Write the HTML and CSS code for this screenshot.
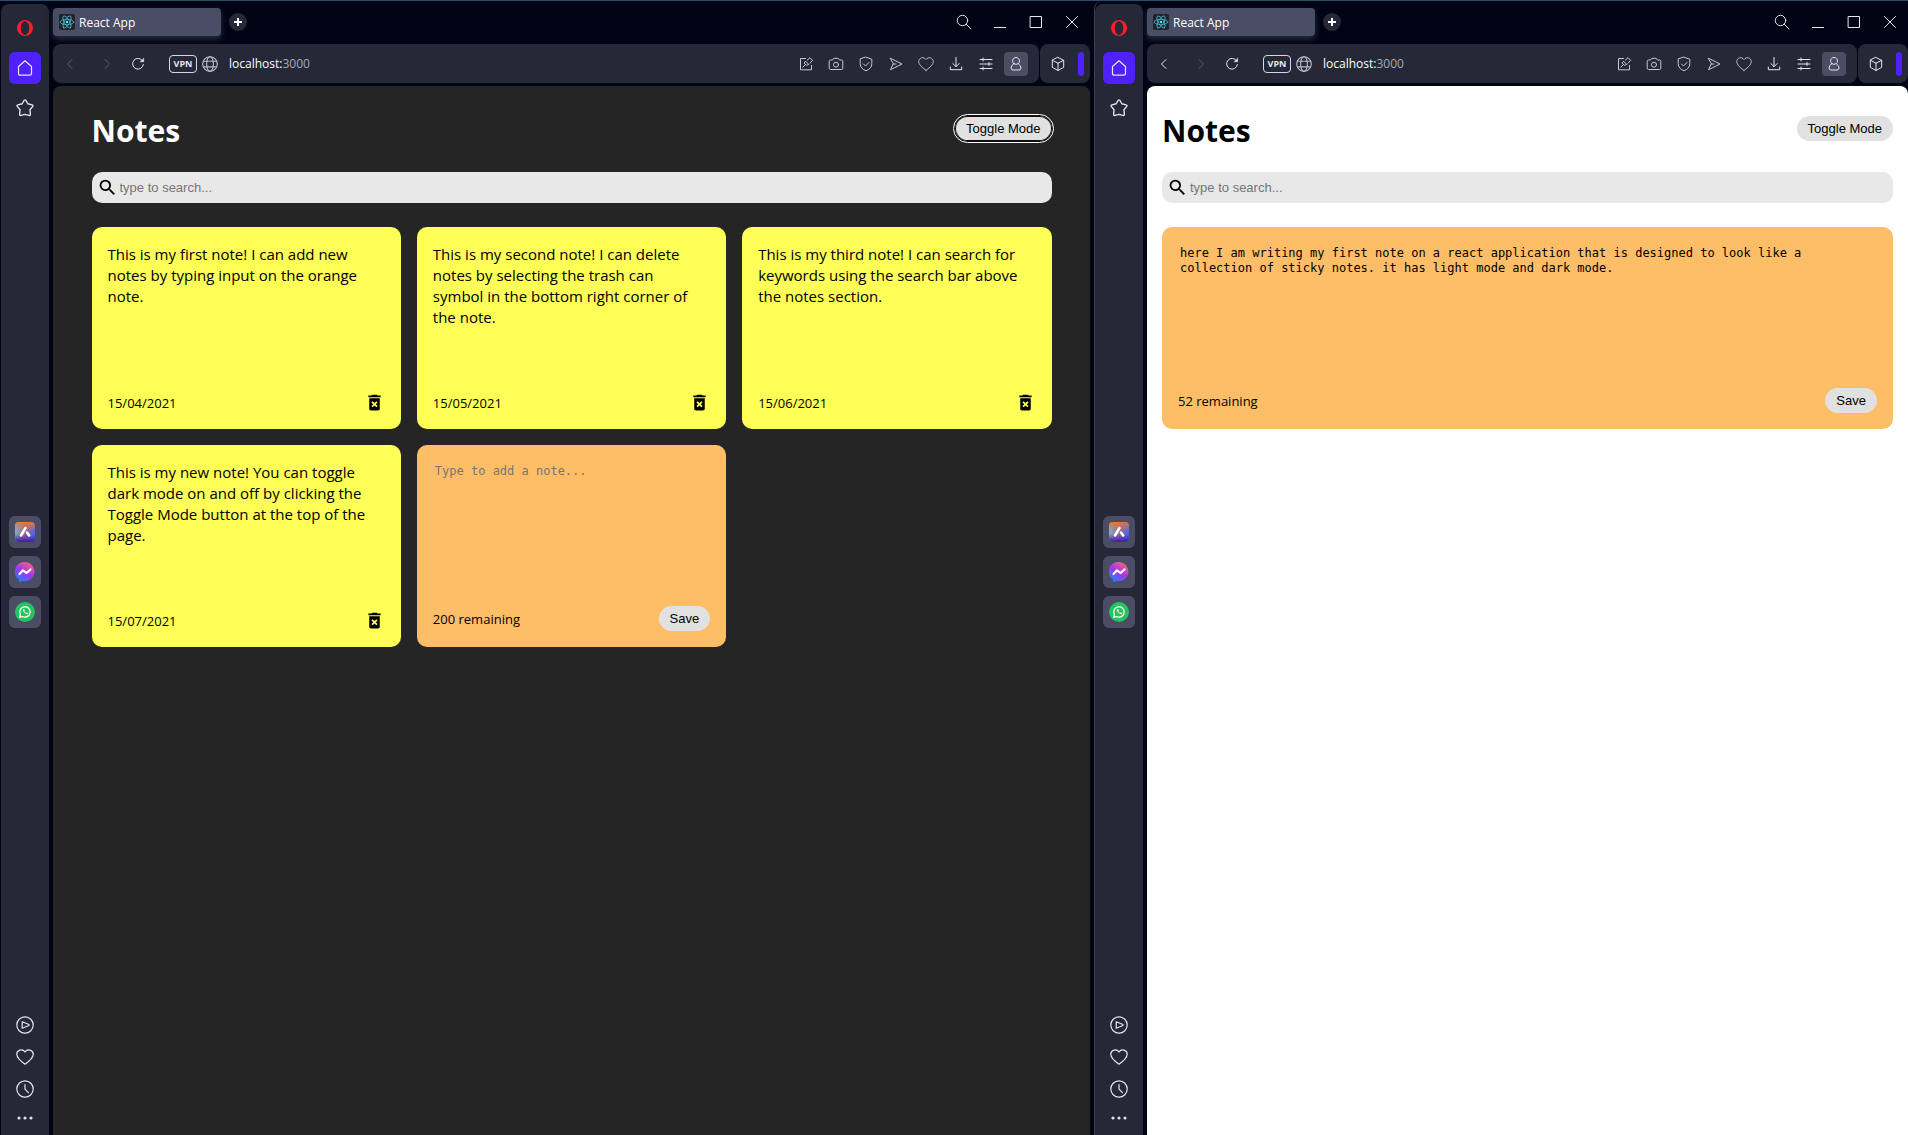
FILE: index.html
```html
<!DOCTYPE html>
<html lang="en">
<head>
<meta charset="utf-8">
<title>React App</title>
<link rel="stylesheet" href="styles.css">
</head>
<body>
<svg class="sprite" aria-hidden="true">
  <defs>
    <linearGradient id="g-messenger" x1="0.8" y1="0" x2="0.2" y2="1">
      <stop offset="0" stop-color="#ff6470"/><stop offset="0.5" stop-color="#a236f0"/><stop offset="1" stop-color="#0a8cff"/>
    </linearGradient>
    <linearGradient id="g-aria" x1="0" y1="0.4" x2="1" y2="0.6">
      <stop offset="0" stop-color="#6fb6d8"/><stop offset="0.45" stop-color="#a4688c"/><stop offset="1" stop-color="#4468f0"/>
    </linearGradient>
    <linearGradient id="g-aria-top" x1="0" y1="0" x2="0" y2="1">
      <stop offset="0" stop-color="#e07840"/><stop offset="0.5" stop-color="#e07840" stop-opacity="0"/><stop offset="0.6" stop-color="#3a1ca0" stop-opacity="0"/><stop offset="1" stop-color="#3a1ca0"/>
    </linearGradient>
  </defs>
  <symbol id="i-opera" viewBox="0 0 16 16"><path fill="#ff1b2d" fill-rule="evenodd" d="M8 0a8 8 0 1 0 0 16A8 8 0 0 0 8 0zm0 1.200c2.600 0 4.200 3.100 4.200 6.800S10.600 14.800 8 14.800 3.800 11.700 3.800 8 5.400 1.200 8 1.200z"/></symbol>
  <symbol id="i-home" viewBox="0 0 16 16"><path d="M1.500 6.500 8 .8l6.500 5.700v7q0 1.700-1.700 1.700H3.200q-1.700 0-1.700-1.700z"/></symbol>
  <symbol id="i-star" viewBox="0 0 16 16"><path d="M7.200 1.200q.8-.9 1.600 0l1.700 3 3.900 1q1.100.4.500 1.400l-2.500 2.900.4 4.200q-.1 1.200-1.300.9L8 13.600l-3.500 1q-1.200.3-1.300-.9l.4-4.200L1.100 6.600q-.6-1 .5-1.400l3.900-1z"/></symbol>
  <symbol id="i-aria" viewBox="0 0 20 20"><rect width="20" height="20" rx="4" fill="url(#g-aria)" stroke="none"/><rect width="20" height="20" rx="4" fill="url(#g-aria-top)" stroke="none"/><path d="M6 13.500 10.500 6M12 10.500l2.200 3" stroke="#fff" stroke-width="2.600"/></symbol>
  <symbol id="i-messenger" viewBox="0 0 20 20"><path fill="url(#g-messenger)" stroke="none" d="M10 0a10 9.600 0 1 1-2.500 19L4 20.400v-2.800A9.600 9.600 0 0 1 10 0z"/><path d="M4.500 12 8 8.300l3.500 2.700L15.500 7.500" stroke="#fff" stroke-width="2.200"/></symbol>
  <symbol id="i-whatsapp" viewBox="0 0 20 20"><circle cx="10" cy="10" r="10" fill="#25c55e" stroke="none"/><path d="M4.600 15.400l.8-2.900a5.200 5.200 0 1 1 2 2z" stroke="#fff" stroke-width="1.300"/><path d="M7.800 7.500q.3 3.700 4.500 4.800l1-1.100-1.600-.9-.8.600q-1.300-.6-1.600-1.700l.5-.7-.7-1.500z" fill="#fff" stroke="none"/></symbol>
  <symbol id="i-play" viewBox="0 0 18 18"><circle cx="9" cy="9" r="8.200"/><path d="M6.200 5.800v6.400L13 9.500V8.500z"/></symbol>
  <symbol id="i-heart" viewBox="0 0 18 16"><path d="M9 15.200Q.8 9.500.8 5.300C.8 1 6.500-.8 9 3c2.500-3.800 8.200-2 8.200 2.300Q17.200 9.500 9 15.200z"/></symbol>
  <symbol id="i-clock" viewBox="0 0 18 18"><circle cx="9" cy="9" r="8.200"/><path d="M9 4.500v4.700l3.400 3.500"/></symbol>
  <symbol id="i-dots" viewBox="0 0 16 4"><g fill="#e0e2ea" stroke="none"><circle cx="2" cy="2" r="1.600"/><circle cx="8" cy="2" r="1.600"/><circle cx="14" cy="2" r="1.600"/></g></symbol>
  <symbol id="i-react" viewBox="0 0 16 16"><rect width="16" height="16" rx="2" fill="#20232a" stroke="none"/><g stroke="#4fb6cf" stroke-width="0.800"><ellipse cx="8" cy="8" rx="6.800" ry="2.700"/><ellipse cx="8" cy="8" rx="6.800" ry="2.700" transform="rotate(60 8 8)"/><ellipse cx="8" cy="8" rx="6.800" ry="2.700" transform="rotate(120 8 8)"/></g><circle cx="8" cy="8" r="1.300" fill="#61dafb" stroke="none"/></symbol>
  <symbol id="i-plus" viewBox="0 0 10 10"><path d="M5 1v8M1 5h8" stroke="#fff" stroke-width="2" stroke-linecap="butt"/></symbol>
  <symbol id="i-find" viewBox="0 0 16 16"><circle cx="6.500" cy="6.500" r="5.200"/><path d="M10.300 10.300 15 15"/></symbol>
  <symbol id="i-min" viewBox="0 0 14 14"><path d="M1 12.500h12" stroke-linecap="butt"/></symbol>
  <symbol id="i-max" viewBox="0 0 14 14"><path d="M1.500 1.500h11v11h-11z" stroke-linejoin="miter"/></symbol>
  <symbol id="i-close" viewBox="0 0 14 14"><path d="M1.500 1.500l11 11M12.500 1.500l-11 11"/></symbol>
  <symbol id="i-back" viewBox="0 0 14 14"><path d="M9 2.500 4.500 7 9 11.500"/></symbol>
  <symbol id="i-forward" viewBox="0 0 14 14"><path d="M5 2.500 9.500 7 5 11.500"/></symbol>
  <symbol id="i-reload" viewBox="0 0 14 14"><path d="M11.500 3.700A5.400 5.400 0 1 0 12.400 7.500"/><path d="M12.700 1.500v3.300H9.300z" fill="currentColor" stroke-width="0.500"/></symbol>
  <symbol id="i-globe" viewBox="0 0 16 16"><circle cx="8" cy="8" r="6.500"/><ellipse cx="8" cy="8" rx="3" ry="6.500"/><path d="M2.300 5.500h11.400M2.300 10.500h11.400"/></symbol>
  <symbol id="i-edit" viewBox="0 0 16 16"><path d="M7.500 2.500h-5v11.300h11V9.500M4.800 11.200l3-3M9.200 4.200 12 1.700l2.600 2.600L12 7.200M7.800 5.500l3 3-2.400.8-2-2z"/></symbol>
  <symbol id="i-camera" viewBox="0 0 16 16"><path d="M1.200 5.200q0-1.200 1.300-1.200h2l1.300-1.700h4.400L11.500 4h2q1.300 0 1.300 1.200v7q0 1.300-1.300 1.300h-11q-1.300 0-1.300-1.300z"/><circle cx="8" cy="8.700" r="2.500"/></symbol>
  <symbol id="i-shield" viewBox="0 0 16 16"><path d="M8 1.200l5.800 2v4.500q0 5-5.800 7-5.800-2-5.800-7V3.200zM5.500 8l2 2 3.500-3.500"/></symbol>
  <symbol id="i-send" viewBox="0 0 16 16"><path d="M2.500 2.300 14 8 2.500 13.700 5.200 8zM5.200 8H8"/></symbol>
  <symbol id="i-download" viewBox="0 0 16 16"><path d="M8 1.500v9M4.800 7.500 8 10.700l3.200-3.200M2.300 11v2.700h11.400V11"/></symbol>
  <symbol id="i-sliders" viewBox="0 0 16 16"><path d="M2 3.500h12M2 8h12M2 12.500h12M5 2v3M11 6.500v3M5 11v3"/></symbol>
  <symbol id="i-person" viewBox="0 0 16 16"><path d="M5.800 7.700a3.500 3.500 0 1 1 4.400 0Q13 9.500 13 12q0 2-2 2H5q-2 0-2-2 0-2.500 2.800-4.300zM5.800 7.700q2.200 1.700 4.400 0"/></symbol>
  <symbol id="i-cube" viewBox="0 0 16 16"><path d="M8 1.500l5.700 2.800v7L8 14.500l-5.700-3.200v-7zM2.300 4.300 8 7.200l5.700-2.900M8 7.200v7.300"/></symbol>
  <symbol id="i-search" viewBox="0 0 24 24"><path fill="#000" stroke="none" d="M15.500 14h-.79l-.28-.27A6.471 6.471 0 0 0 16 9.500 6.500 6.500 0 1 0 9.500 16c1.610 0 3.090-.59 4.230-1.570l.27.28v.79l5 4.990L20.490 19l-4.990-5zm-6 0C7.010 14 5 11.990 5 9.500S7.010 5 9.500 5 14 7.010 14 9.500 11.990 14 9.500 14z"/></symbol>
  <symbol id="i-trash" viewBox="0 0 24 24"><path fill="#000" stroke="none" d="M6 19c0 1.100.9 2 2 2h8c1.100 0 2-.9 2-2V7H6v12zm2.460-7.120l1.410-1.410L12 12.590l2.120-2.120 1.410 1.410L13.410 14l2.120 2.120-1.410 1.410L12 15.410l-2.120 2.120-1.410-1.410L10.590 14l-2.130-2.120zM15.500 4l-1-1h-5l-1 1H5v2h14V4z"/></symbol>
</svg>

<div class="desktop">
  <section class="window window-dark">
    <nav class="sidebar" aria-label="Sidebar">
      <div class="side-group">
        <button class="side-btn" aria-label="Opera menu"><svg class="s16"><use href="#i-opera"/></svg></button>
        <button class="side-btn side-home" aria-label="Home"><svg class="s16"><use href="#i-home"/></svg></button>
        <button class="side-btn" aria-label="Pinboards"><svg class="s18"><use href="#i-star"/></svg></button>
      </div>
      <div class="side-group">
        <button class="side-btn side-app" aria-label="Aria"><svg class="s20"><use href="#i-aria"/></svg></button>
        <button class="side-btn side-app" aria-label="Messenger"><svg class="s20"><use href="#i-messenger"/></svg></button>
        <button class="side-btn side-app" aria-label="WhatsApp"><svg class="s20"><use href="#i-whatsapp"/></svg></button>
      </div>
      <div class="side-group side-tools">
        <button class="side-btn" aria-label="Player"><svg class="s18"><use href="#i-play"/></svg></button>
        <button class="side-btn" aria-label="Favourites"><svg class="s18"><use href="#i-heart"/></svg></button>
        <button class="side-btn" aria-label="History"><svg class="s18"><use href="#i-clock"/></svg></button>
        <button class="side-btn side-more" aria-label="More"><svg class="s16"><use href="#i-dots"/></svg></button>
      </div>
    </nav>
    <div class="main">
      <div class="tabbar">
        <button class="tab"><svg class="s16"><use href="#i-react"/></svg>React App</button>
        <button class="new-tab" aria-label="New tab"><svg class="s10"><use href="#i-plus"/></svg></button>
        <div class="controls">
          <button aria-label="Search tabs"><svg class="s16"><use href="#i-find"/></svg></button>
          <button aria-label="Minimise"><svg class="s14"><use href="#i-min"/></svg></button>
          <button aria-label="Maximise"><svg class="s14"><use href="#i-max"/></svg></button>
          <button aria-label="Close"><svg class="s14"><use href="#i-close"/></svg></button>
        </div>
      </div>
      <div class="toolbar">
        <div class="bar">
          <div class="history">
            <button class="icon-btn" disabled aria-label="Back"><svg class="s14"><use href="#i-back"/></svg></button>
            <button class="icon-btn" disabled aria-label="Forward"><svg class="s14"><use href="#i-forward"/></svg></button>
          </div>
          <button class="icon-btn" aria-label="Reload"><svg class="s14"><use href="#i-reload"/></svg></button>
          <button class="vpn">VPN</button>
          <svg class="site-icon"><use href="#i-globe"/></svg>
          <span class="address">localhost:<span class="port">3000</span></span>
          <div class="actions">
            <button class="icon-btn dim" aria-label="Edit page"><svg class="s16"><use href="#i-edit"/></svg></button>
            <button class="icon-btn dim" aria-label="Snapshot"><svg class="s16"><use href="#i-camera"/></svg></button>
            <button class="icon-btn dim" aria-label="Ad blocker"><svg class="s16"><use href="#i-shield"/></svg></button>
            <button class="icon-btn dim" aria-label="Send to flow"><svg class="s16"><use href="#i-send"/></svg></button>
            <button class="icon-btn dim" aria-label="Bookmark"><svg class="s16"><use href="#i-heart"/></svg></button>
            <button class="icon-btn" aria-label="Downloads"><svg class="s16"><use href="#i-download"/></svg></button>
            <button class="icon-btn" aria-label="Easy setup"><svg class="s16"><use href="#i-sliders"/></svg></button>
            <button class="icon-btn profile" aria-label="Profile"><svg class="s16"><use href="#i-person"/></svg></button>
          </div>
        </div>
        <div class="bar bar-ext">
          <button class="icon-btn" aria-label="Extensions"><svg class="s16"><use href="#i-cube"/></svg></button>
          <span class="accent"></span>
        </div>
      </div>
      <main class="page page-dark">
        <div class="container">
          <header class="header"><h1>Notes</h1><button class="pill toggle focused">Toggle Mode</button></header>
          <label class="search"><svg class="s21"><use href="#i-search"/></svg><input type="text" aria-label="Search notes" placeholder="type to search..."></label>
          <div class="notes">
            <article class="note"><p>This is my first note! I can add new notes by typing input on the orange note.</p><footer><small>15/04/2021</small><button class="delete" aria-label="Delete note"><svg class="s21"><use href="#i-trash"/></svg></button></footer></article>
            <article class="note"><p>This is my second note! I can delete notes by selecting the trash can symbol in the bottom right corner of the note.</p><footer><small>15/05/2021</small><button class="delete" aria-label="Delete note"><svg class="s21"><use href="#i-trash"/></svg></button></footer></article>
            <article class="note"><p>This is my third note! I can search for keywords using the search bar above the notes section.</p><footer><small>15/06/2021</small><button class="delete" aria-label="Delete note"><svg class="s21"><use href="#i-trash"/></svg></button></footer></article>
            <article class="note"><p>This is my new note! You can toggle dark mode on and off by clicking the Toggle Mode button at the top of the page.</p><footer><small>15/07/2021</small><button class="delete" aria-label="Delete note"><svg class="s21"><use href="#i-trash"/></svg></button></footer></article>
            <article class="note note-new"><textarea rows="8" aria-label="New note" placeholder="Type to add a note..."></textarea><footer><small>200 remaining</small><button class="pill">Save</button></footer></article>
          </div>
        </div>
      </main>
    </div>
  </section>

  <section class="window window-light">
    <nav class="sidebar" aria-label="Sidebar">
      <div class="side-group">
        <button class="side-btn" aria-label="Opera menu"><svg class="s16"><use href="#i-opera"/></svg></button>
        <button class="side-btn side-home" aria-label="Home"><svg class="s16"><use href="#i-home"/></svg></button>
        <button class="side-btn" aria-label="Pinboards"><svg class="s18"><use href="#i-star"/></svg></button>
      </div>
      <div class="side-group">
        <button class="side-btn side-app" aria-label="Aria"><svg class="s20"><use href="#i-aria"/></svg></button>
        <button class="side-btn side-app" aria-label="Messenger"><svg class="s20"><use href="#i-messenger"/></svg></button>
        <button class="side-btn side-app" aria-label="WhatsApp"><svg class="s20"><use href="#i-whatsapp"/></svg></button>
      </div>
      <div class="side-group side-tools">
        <button class="side-btn" aria-label="Player"><svg class="s18"><use href="#i-play"/></svg></button>
        <button class="side-btn" aria-label="Favourites"><svg class="s18"><use href="#i-heart"/></svg></button>
        <button class="side-btn" aria-label="History"><svg class="s18"><use href="#i-clock"/></svg></button>
        <button class="side-btn side-more" aria-label="More"><svg class="s16"><use href="#i-dots"/></svg></button>
      </div>
    </nav>
    <div class="main">
      <div class="tabbar">
        <button class="tab"><svg class="s16"><use href="#i-react"/></svg>React App</button>
        <button class="new-tab" aria-label="New tab"><svg class="s10"><use href="#i-plus"/></svg></button>
        <div class="controls">
          <button aria-label="Search tabs"><svg class="s16"><use href="#i-find"/></svg></button>
          <button aria-label="Minimise"><svg class="s14"><use href="#i-min"/></svg></button>
          <button aria-label="Maximise"><svg class="s14"><use href="#i-max"/></svg></button>
          <button aria-label="Close"><svg class="s14"><use href="#i-close"/></svg></button>
        </div>
      </div>
      <div class="toolbar">
        <div class="bar">
          <div class="history">
            <button class="icon-btn" aria-label="Back"><svg class="s14"><use href="#i-back"/></svg></button>
            <button class="icon-btn" disabled aria-label="Forward"><svg class="s14"><use href="#i-forward"/></svg></button>
          </div>
          <button class="icon-btn" aria-label="Reload"><svg class="s14"><use href="#i-reload"/></svg></button>
          <button class="vpn">VPN</button>
          <svg class="site-icon"><use href="#i-globe"/></svg>
          <span class="address">localhost:<span class="port">3000</span></span>
          <div class="actions">
            <button class="icon-btn dim" aria-label="Edit page"><svg class="s16"><use href="#i-edit"/></svg></button>
            <button class="icon-btn dim" aria-label="Snapshot"><svg class="s16"><use href="#i-camera"/></svg></button>
            <button class="icon-btn dim" aria-label="Ad blocker"><svg class="s16"><use href="#i-shield"/></svg></button>
            <button class="icon-btn dim" aria-label="Send to flow"><svg class="s16"><use href="#i-send"/></svg></button>
            <button class="icon-btn dim" aria-label="Bookmark"><svg class="s16"><use href="#i-heart"/></svg></button>
            <button class="icon-btn" aria-label="Downloads"><svg class="s16"><use href="#i-download"/></svg></button>
            <button class="icon-btn" aria-label="Easy setup"><svg class="s16"><use href="#i-sliders"/></svg></button>
            <button class="icon-btn profile" aria-label="Profile"><svg class="s16"><use href="#i-person"/></svg></button>
          </div>
        </div>
        <div class="bar bar-ext">
          <button class="icon-btn" aria-label="Extensions"><svg class="s16"><use href="#i-cube"/></svg></button>
          <span class="accent"></span>
        </div>
      </div>
      <main class="page">
        <div class="container">
          <header class="header"><h1>Notes</h1><button class="pill toggle">Toggle Mode</button></header>
          <label class="search"><svg class="s21"><use href="#i-search"/></svg><input type="text" aria-label="Search notes" placeholder="type to search..."></label>
          <div class="notes">
            <article class="note note-new"><textarea rows="8" aria-label="New note" placeholder="Type to add a note...">here I am writing my first note on a react application that is designed to look like a collection of sticky notes. it has light mode and dark mode.</textarea><footer><small>52 remaining</small><button class="pill">Save</button></footer></article>
          </div>
        </div>
      </main>
    </div>
  </section>
</div>
</body>
</html>
```
FILE: styles.css
```css
* { box-sizing: border-box; }

body {
  margin: 0;
  background: #000414;
  font-family: "Open Sans", "Noto Sans", sans-serif;
}

button {
  margin: 0;
  padding: 0;
  border: 0;
  background: none;
  color: inherit;
  font: inherit;
  cursor: pointer;
}

svg {
  display: block;
  flex: none;
  fill: none;
  stroke: currentColor;
  stroke-linecap: round;
  stroke-linejoin: round;
}

.sprite { position: absolute; width: 0; height: 0; }
.s10 { width: 10px; height: 10px; }
.s14 { width: 14px; height: 14px; }
.s16 { width: 16px; height: 16px; }
.s18 { width: 18px; height: 18px; }
.s20 { width: 20px; height: 20px; }
.s21 { width: 21px; height: 21px; }

.desktop {
  display: grid;
  grid-template-columns: 1094fr 814fr;
  min-height: 100vh;
  border-top: 1px solid #2d4a66;
}

.window {
  display: flex;
  gap: 4px;
  min-width: 0;
  padding-top: 3px;
  color: #e4e6ee;
}
.window-dark { padding-right: 4px; border-left: 1px solid #000414; }
.window-light { border-left: 1px solid #3c3f4c; border-top-left-radius: 8px; }

/* Sidebar */
.sidebar {
  display: grid;
  grid-template-rows: 1fr auto 1fr;
  flex: none;
  width: 48px;
  padding: 8px 8px 4px;
  border-radius: 8px 8px 0 0;
  background: #252836;
}
.side-group { display: flex; flex-direction: column; gap: 8px; }
.side-tools { gap: 0; justify-content: flex-end; }
.side-btn {
  display: grid;
  place-items: center;
  width: 32px;
  height: 32px;
  border-radius: 6px;
}
.side-btn svg { stroke-width: 1.2; }
.side-btn use[href="#i-opera"] { stroke: none; }
.side-home { background: #5120ff; }
.side-app { background: #4a4d64; }
.side-more { height: 26px; }

/* Tabs */
.main { display: flex; flex: 1; flex-direction: column; min-width: 0; }
.tabbar { display: flex; height: 40px; padding-top: 4px; }
.tab {
  display: flex;
  align-items: center;
  gap: 4px;
  width: 168px;
  height: 28px;
  padding: 0 6px;
  border-radius: 4px;
  background: #4a4d66;
  box-shadow: 0 3px 6px #2c2e40;
  color: #fff;
  font-size: 12px;
}
.new-tab {
  display: grid;
  place-items: center;
  width: 18px;
  height: 18px;
  margin: 5px 8px;
  border-radius: 50%;
  background: #252836;
}
.controls { display: flex; margin-left: auto; }
.controls button { display: grid; place-items: center; width: 36px; height: 28px; }

/* Address bar */
.toolbar { display: flex; gap: 1px; }
.bar {
  display: flex;
  align-items: center;
  flex: 1;
  height: 39px;
  padding: 0 11px 0 5px;
  border-radius: 8px;
  background: #252836;
}
.history { display: flex; gap: 13px; margin-right: 7px; }
.icon-btn {
  display: grid;
  place-items: center;
  width: 24px;
  height: 24px;
  border-radius: 4px;
}
.icon-btn:disabled { color: #5c5f70; }
.dim { color: #c6c9d4; }
.vpn {
  width: 28px;
  height: 18px;
  margin-left: 19px;
  border: 1px solid #d5d7e0;
  border-radius: 4px;
  font-size: 9px;
  font-weight: 700;
  line-height: 16px;
}
.site-icon { width: 18px; height: 18px; margin: 0 10px 0 4px; color: #b9bcca; }
.address { color: #fff; font-size: 12px; }
.port { color: #a6a9b8; }
.actions { display: flex; gap: 6px; margin-left: auto; }
.profile { background: #4a4d64; }
.bar-ext { flex: none; gap: 8px; padding: 0 6px; }
.accent { width: 6px; height: 24px; border-radius: 3px; background: #5120ff; }

/* Notes app */
.page {
  flex: 1;
  margin-top: 3px;
  padding: 0 15px;
  border-radius: 8px 8px 0 0;
  background: #fff;
  color: #000;
}
.page-dark { background: #252525; }
.page-dark h1 { color: #fff; }
.container { max-width: 960px; margin: 0 auto; }
.header {
  display: flex;
  align-items: flex-start;
  justify-content: space-between;
  padding-top: 21px;
}
h1 { margin: 0; font-size: 30px; font-weight: 700; line-height: 48px; }
.pill {
  padding: 5px 11px;
  border-radius: 15px;
  background: #e1e1e1;
  color: #000;
  font: 13px/15px "Liberation Sans", Arial, sans-serif;
}
.toggle { margin-top: 9px; }
.focused {
  box-shadow: 0 0 0 1px #101010, inset 0 0 0 1px #101010;
  outline: 1px solid #fff;
  outline-offset: 1px;
}

.search {
  display: flex;
  align-items: center;
  margin-top: 17px;
  padding: 5px;
  border-radius: 10px;
  background: #e8e8e8;
}
.search input {
  flex: 1;
  min-width: 0;
  height: 21px;
  padding: 0 2px;
  border: 0;
  background: none;
  font: 13px/21px "Liberation Sans", Arial, sans-serif;
}
::placeholder { color: #757575; }

.notes {
  display: grid;
  grid-template-columns: repeat(auto-fit, minmax(250px, 1fr));
  gap: 16px;
  margin-top: 24px;
}
.note {
  display: flex;
  flex-direction: column;
  justify-content: space-between;
  min-height: 202px;
  padding: 16px;
  border-radius: 10px;
  background: #ffff57;
}
.note p { margin: 0; padding: 1px 8px 0 0; font-size: 15px; line-height: 21px; }
.note footer { display: flex; align-items: center; justify-content: space-between; }
.note small { font-size: 13px; line-height: 20px; }
.note-new { background: #febe68; }
.note textarea {
  padding: 3px 2px 0;
  border: 0;
  background: none;
  color: #000;
  font: 12px/15px "DejaVu Sans Mono", "Liberation Mono", monospace;
  resize: none;
}
.note textarea::placeholder { color: #757575; }
```
